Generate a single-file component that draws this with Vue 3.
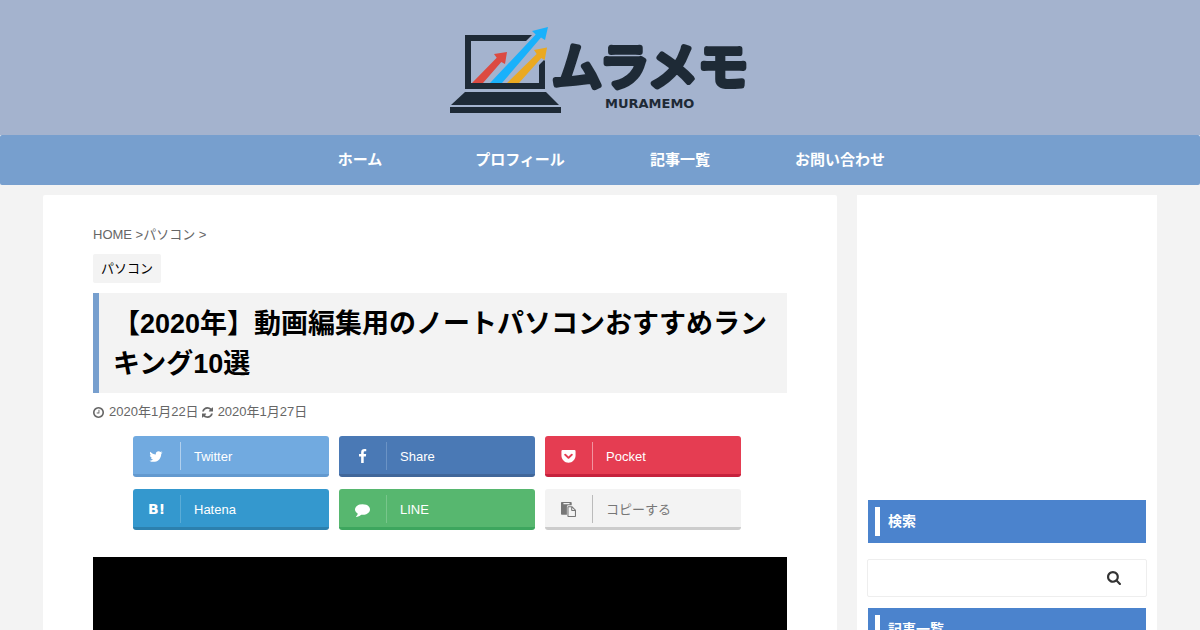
<script setup>
const nav = ['ホーム', 'プロフィール', '記事一覧', 'お問い合わせ']

const icons = {
  twitter: 'M1620 408q-67 98-162 167 1 14 1 42 0 130-38 259.500t-115.500 248.500-184.500 210.500-258 146-323 54.500q-271 0-496-145 35 4 78 4 225 0 401-138-105-2-188-64.500t-114-159.500q33 5 61 5 43 0 85-11-112-23-185.500-111.500t-73.500-205.500v-4q68 38 146 41-66-44-105-115t-39-154q0-88 44-163 121 149 294.500 238.500t371.500 99.500q-8-38-8-74 0-134 94.500-228.500t228.500-94.500q140 0 236 102 109-21 205-78-37 115-142 178 93-10 186-50z',
  facebook: 'M1343 12v264h-157q-86 0-116 36t-30 108v189h293l-39 296h-254v759h-306v-759h-255v-296h255v-218q0-186 104-288.500t277-102.500q147 0 228 12z',
  pocket: 'M190 130H1602Q1740 130 1740 270V780C1740 1250 1360 1640 896 1640S52 1250 52 780V270Q52 130 190 130zM500 560Q430 560 392 620T410 740L810 1125Q896 1205 982 1125L1382 740Q1430 690 1396 620T1290 560Q1240 560 1210 590L896 890 582 590Q550 560 500 560z',
  comment: 'M1792 896q0 174-120 321.500t-326 233-450 85.500q-70 0-145-8-198 175-460 242-49 14-114 22-17 2-30.500-9t-17.500-29v-1q-3-4-.5-12t2-10 4.500-9.500l6-9 7-8.500 8-9q7-8 31-34.500t34.500-38 31-39.500 32.500-51 27-59 26-76q-157-89-247.500-220t-90.500-281q0-130 71-248.500t191-204.500 286-136.500 348-50.500q244 0 450 85.500t326 233 120 321.500z',
  paste: 'M96 0H1184Q1280 0 1280 96V384H864Q704 384 704 544V1536H96Q0 1536 0 1440V96Q0 0 96 0zM288 128V256H1024V128zM864 512H1344L1792 960V1696Q1792 1792 1696 1792H864Q768 1792 768 1696V608Q768 512 864 512zM896 640V1664H1664V1088H1312Q1216 1088 1216 992V640zM1344 690V960H1614z',
  clock: 'M1024 544v448q0 14-9 23t-23 9h-320q-14 0-23-9t-9-23v-64q0-14 9-23t23-9h224v-352q0-14 9-23t23-9h64q14 0 23 9t9 23zm416 352q0-148-73-273t-198-198-273-73-273 73-198 198-73 273 73 273 198 198 273 73 273-73 198-198 73-273zm224 0q0 209-103 385.500t-279.500 279.500-385.500 103-385.500-103-279.500-279.500-103-385.500 103-385.500 279.500-279.500 385.500-103 385.500 103 279.500 279.500 103 385.500z',
  refresh: 'M1639 1056q0 5-1 7-64 268-268 434.500t-478 166.500q-146 0-282.500-55t-243.500-157l-129 129q-19 19-45 19t-45-19-19-45v-448q0-26 19-45t45-19h448q26 0 45 19t19 45-19 45l-137 137q71 66 161 102t187 36q134 0 250-65t186-179q11-17 53-117 8-23 30-23h192q13 0 22.500 9.500t9.500 22.500zm25-800v448q0 26-19 45t-45 19h-448q-26 0-45-19t-19-45 19-45l138-138q-148-137-349-137-134 0-250 65t-186 179q-11 17-53 117-8 23-30 23h-199q-13 0-22.500-9.500t-9.500-22.500v-7q65-268 270-434.500t480-166.500q146 0 284 55.500t245 156.500l130-129q19-19 45-19t45 19 19 45z',
  search: 'M1216 832q0-185-131.500-316.500t-316.500-131.500-316.500 131.500-131.500 316.500 131.500 316.500 316.500 131.500 316.500-131.500 131.500-316.500zm512 832q0 52-38 90t-90 38q-54 0-90-38l-343-342q-179 124-399 124-143 0-273.500-55.500t-225-150-150-225-55.500-273.500 55.500-273.500 150-225 225-150 273.500-55.500 273.500 55.500 225 150 150 225 55.500 273.500q0 220-124 399l343 343q37 37 37 90z',
}

const shares = [
  { name: 'twitter', label: 'Twitter', icon: icons.twitter },
  { name: 'facebook', label: 'Share', icon: icons.facebook },
  { name: 'pocket', label: 'Pocket', icon: icons.pocket },
  { name: 'hatena', label: 'Hatena', mark: 'B!' },
  { name: 'line', label: 'LINE', icon: icons.comment },
  { name: 'copy', label: 'コピーする', icon: icons.paste },
]
</script>

<template>
  <div class="page">
    <header class="header">
      <a href="#" class="logo">
        <svg viewBox="0 0 300 90" width="300" height="90">
          <g fill="#1e2a36">
            <path d="M15 10H82L76 16H21V58H89V40L94 35L95 36V64H15Z" />
            <path d="M15 67H96L109 80H1Z" />
            <path d="M0 82H111V88H0Z" />
          </g>
          <path fill="#dc4a41" d="M22 58L46.700 32.700L44 29L57 27L55 39L51.300 37L33 58Z" />
          <path fill="#19b1fb" d="M40 58L85.700 9.500L82 6L98 2L95 15L91 12.500L52 58Z" />
          <path fill="#eaa921" d="M57 58L86.700 29L84 25L97 22.500L94.700 35L91.300 33L69 58Z" />
          <text class="logo-kana" x="102" y="60">ムラメモ</text>
          <text class="logo-latin" x="155" y="83">MURAMEMO</text>
        </svg>
      </a>
    </header>

    <nav class="nav">
      <ul>
        <li v-for="item in nav" :key="item"><a href="#">{{ item }}</a></li>
      </ul>
    </nav>

    <div class="content">
      <main class="main">
        <div class="breadcrumb"><a href="#">HOME</a> &gt;<a href="#">パソコン</a> &gt;</div>
        <a href="#" class="category">パソコン</a>
        <h1>【2020年】動画編集用のノートパソコンおすすめランキング10選</h1>
        <div class="dates">
          <svg viewBox="128 128 1536 1536"><path :d="icons.clock" /></svg>
          <time datetime="2020-01-22">2020年1月22日</time>
          <svg viewBox="128 128 1536 1536"><path :d="icons.refresh" /></svg>
          <time datetime="2020-01-27">2020年1月27日</time>
        </div>
        <ul class="shares">
          <li v-for="s in shares" :key="s.name">
            <button type="button" :class="['share', s.name]">
              <span class="share-icon">
                <svg v-if="s.icon" viewBox="0 0 1792 1792"><path fill-rule="evenodd" :d="s.icon" /></svg>
                <b v-else>{{ s.mark }}</b>
              </span>
              <span class="share-label">{{ s.label }}</span>
            </button>
          </li>
        </ul>
        <div class="hero"></div>
      </main>

      <aside class="side">
        <div class="slot"></div>
        <h2>検索</h2>
        <form class="search" @submit.prevent>
          <input type="text" aria-label="検索" />
          <button type="submit" aria-label="検索">
            <svg viewBox="64 128 1664 1664"><path :d="icons.search" /></svg>
          </button>
        </form>
        <h2>記事一覧</h2>
      </aside>
    </div>
  </div>
</template>

<style>
body {
  background: #f3f3f3;
}
</style>

<style scoped>
.page {
  font-family: "Liberation Sans", "Noto Sans CJK JP", sans-serif;
  font-size: 13px;
  line-height: 20px;
  color: #666;
}
a {
  color: inherit;
  text-decoration: none;
}
ul {
  list-style: none;
  margin: 0;
  padding: 0;
}
svg {
  display: block;
  fill: currentColor;
}
.header {
  display: flex;
  justify-content: center;
  padding: 25px 0 20px;
  background: #a4b3ce;
}
.logo-kana {
  font: 400 50px "Noto Sans CJK JP", sans-serif;
  fill: #1e2a36;
  stroke: #1e2a36;
  stroke-width: 6px;
  stroke-linejoin: round;
}
.logo-latin {
  font: bold 13px "DejaVu Sans", sans-serif;
  fill: #1e2a36;
}
.nav {
  background: #779fce;
  border-radius: 2px;
}
.nav ul {
  display: flex;
  justify-content: center;
}
.nav li {
  width: 160px;
}
.nav a {
  display: block;
  text-align: center;
  font-size: 15px;
  line-height: 50px;
  font-weight: bold;
  color: #fff;
}
.content {
  display: flex;
  gap: 20px;
  max-width: 1114px;
  margin: 10px auto 0;
}
.main {
  flex: 1;
  min-width: 0;
  box-sizing: border-box;
  padding: 30px 50px;
  background: #fff;
  border-radius: 2px;
}
.breadcrumb {
  margin-bottom: 9px;
}
.category {
  display: block;
  width: fit-content;
  padding: 0 8px;
  line-height: 29px;
  background: #f3f3f3;
  color: #000;
  border-radius: 2px;
}
h1 {
  margin: 10px 0 9px;
  padding: 11px 0 9px 14px;
  border-left: 6px solid #779fce;
  background: #f3f3f3;
  color: #000;
  font-size: 27px;
  line-height: 40px;
}
.dates {
  display: flex;
  align-items: center;
}
.dates svg {
  width: 11px;
  height: 11px;
  margin-right: 5px;
}
.dates time {
  margin-right: 3px;
}
.shares {
  display: grid;
  grid-template-columns: repeat(3, 1fr);
  gap: 12px 10px;
  margin: 14px 46px 27px 40px;
}
.share {
  display: flex;
  align-items: center;
  width: 100%;
  height: 41px;
  padding: 2px 0 0;
  border: 0;
  border-bottom: 3px solid;
  border-radius: 3px;
  font: inherit;
  color: #fff;
  cursor: pointer;
}
.share-icon {
  display: flex;
  align-items: center;
  justify-content: center;
  width: 47px;
  height: 28px;
  border-right: 1px solid rgba(255, 255, 255, 0.45);
}
.share-icon svg {
  width: 15px;
  height: 15px;
}
.share-icon b {
  font: bold 14px "DejaVu Sans", sans-serif;
}
.share-label {
  margin-left: 13px;
  padding-top: 2px;
}
.twitter { background: #71aae0; border-color: #6299cf; }
.facebook { background: #4a79b5; border-color: #41679a; }
.facebook .share-icon { border-color: #6b93c5; }
.pocket { background: #e53d52; border-color: #c6223d; }
.hatena { background: #3498ce; border-color: #2c80ae; }
.hatena .share-icon { border-color: #5aacd7; }
.line { background: #57b76f; border-color: #3da65e; }
.line .share-icon { border-color: #78c68b; }
.copy { background: #f3f3f3; border-color: #ccc; color: #777; }
.copy .share-icon { border-color: #bbb; }
.hero {
  aspect-ratio: 16 / 9;
  background: #000;
}
.side {
  width: 300px;
  box-sizing: border-box;
  padding: 10px;
  background: #fff;
}
.slot {
  height: 295px;
}
h2 {
  display: flex;
  align-items: center;
  margin: 0 1px;
  padding: 7px;
  background: #4b83cd;
  color: #fff;
  font-size: 14px;
  line-height: 29px;
}
h2::before {
  content: "";
  width: 5px;
  height: 29px;
  margin-right: 8px;
  background: #fff;
}
.search {
  display: flex;
  margin: 16px 0 11px;
  height: 36px;
  border: 1px solid #eee;
  border-radius: 2px;
}
.search input {
  flex: 1;
  min-width: 0;
  padding: 0 10px;
  border: 0;
  background: none;
  font: inherit;
}
.search button {
  display: flex;
  align-items: center;
  justify-content: center;
  width: 64px;
  padding: 0;
  border: 0;
  background: none;
  color: #333;
  cursor: pointer;
}
.search svg {
  width: 14px;
  height: 14px;
}
</style>
